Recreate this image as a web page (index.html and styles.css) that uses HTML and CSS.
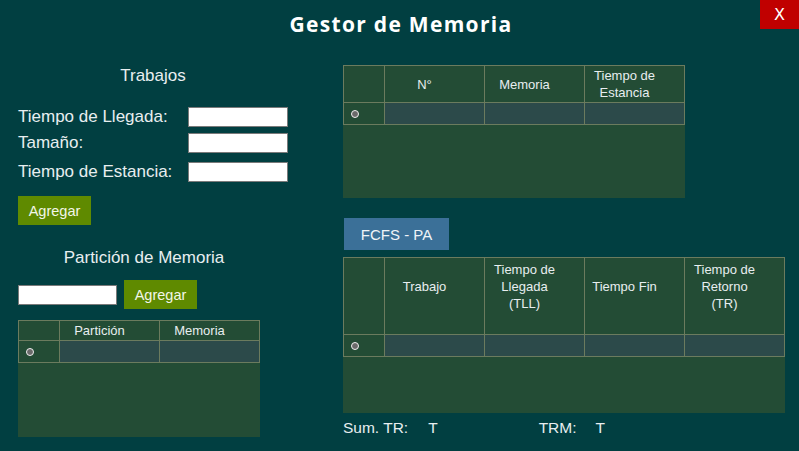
FILE: index.html
```html
<!DOCTYPE html>
<html lang="es">
<head>
<meta charset="utf-8">
<title>Gestor de Memoria</title>
<link rel="stylesheet" href="styles.css">
</head>
<body>
<div class="window">
  <header class="titlebar">
    <h1 class="title">Gestor de Memoria</h1>
    <button class="close">X</button>
  </header>
  <main class="content">
    <section class="left">
      <h2 class="section-title jobs-title">Trabajos</h2>
      <div class="form">
        <label class="field f1"><span>Tiempo de Llegada:</span><input class="txt" type="text"></label>
        <label class="field f2"><span>Tamaño:</span><input class="txt" type="text"></label>
        <label class="field f3"><span>Tiempo de Estancia:</span><input class="txt" type="text"></label>
      </div>
      <button class="btn btn-add">Agregar</button>
      <h2 class="section-title part-title">Partición de Memoria</h2>
      <div class="part-row">
        <input class="txt" type="text">
        <button class="btn btn-add2">Agregar</button>
      </div>
      <div class="grid grid-part">
        <table>
          <tr class="head"><th class="rh"></th><th class="c">Partición</th><th class="c">Memoria</th></tr>
          <tr class="row"><td class="rh"><span class="dot"></span></td><td></td><td></td></tr>
        </table>
      </div>
    </section>
    <section class="right">
      <div class="grid grid-jobs">
        <table>
          <tr class="head"><th class="rh"></th><th class="c">N°</th><th class="c">Memoria</th><th class="c">Tiempo de<br>Estancia</th></tr>
          <tr class="row"><td class="rh"><span class="dot"></span></td><td></td><td></td><td></td></tr>
        </table>
      </div>
      <button class="btn-algo">FCFS - PA</button>
      <div class="grid grid-res">
        <table>
          <tr class="head"><th class="rh"></th><th class="c">Trabajo</th><th class="c">Tiempo de<br>Llegada<br>(TLL)</th><th class="c">Tiempo Fin</th><th class="c">Tiempo de<br>Retorno<br>(TR)</th></tr>
          <tr class="row"><td class="rh"><span class="dot"></span></td><td></td><td></td><td></td><td></td></tr>
        </table>
      </div>
      <div class="summary">
        <span class="lbl">Sum. TR:</span><span class="val v1">T</span>
        <span class="lbl l2">TRM:</span><span class="val v2">T</span>
      </div>
    </section>
  </main>
</div>
</body>
</html>
```
FILE: styles.css
```css
* { box-sizing: border-box; }
html, body { margin: 0; padding: 0; }
body {
  background: #013f41;
  font-family: "Liberation Sans", Arial, sans-serif;
  color: #e8eef0;
  width: 799px;
  height: 451px;
  overflow: hidden;
}
.window { position: relative; width: 799px; height: 451px; }
.titlebar { height: 50px; display: flex; justify-content: center; align-items: flex-start; }
.title {
  margin: 10px 0 0 3px;
  font-family: "Open Sans", sans-serif;
  font-weight: 700;
  font-size: 21px;
  letter-spacing: 1.3px;
  color: #ffffff;
  line-height: 28px;
}
.close {
  position: absolute;
  right: 0;
  top: 0;
  width: 39px;
  height: 29px;
  border: 0;
  background: #c00000;
  color: #fff;
  font-family: "DejaVu Sans", sans-serif;
  font-size: 16px;
  padding: 0;
}
.content { display: flex; }
.left { width: 343px; flex: none; padding-left: 18px; display: flex; flex-direction: column; }
.right { display: flex; flex-direction: column; padding-top: 15px; }
.section-title {
  margin: 0;
  font-weight: 400;
  font-size: 17px;
  color: #e8eef0;
  text-align: center;
  width: 270px;
  line-height: 20px;
}
.jobs-title { margin-top: 16px; }
.form { margin-top: 21px; display: flex; flex-direction: column; }
.field { display: flex; align-items: center; justify-content: space-between; width: 270px; font-size: 17px; height: 20px; }
.f2 { margin-top: 6px; }
.f3 { margin-top: 9px; }
.txt {
  width: 100px;
  height: 20px;
  border: 1px solid #7a7a7a;
  background: #fff;
  padding: 0;
  margin: 0;
}
.btn {
  background: #5f8a00;
  color: #f2f6e8;
  border: 0;
  font-family: "Liberation Sans", Arial, sans-serif;
  font-size: 14.5px;
  padding: 0;
}
.btn-add { margin-top: 14px; width: 73px; height: 29px; }
.part-title { margin-top: 23px; width: 252px; }
.part-row { margin-top: 12px; display: flex; align-items: center; gap: 7px; }
.part-row .txt { width: 99px; }
.btn-add2 { width: 73px; height: 29px; }
.grid { background: #234c35; }
.grid table { border-collapse: collapse; }
.grid th, .grid td { border: 1px solid #6b7b5e; padding: 0; }
.grid th {
  font-weight: 400;
  font-size: 13px;
  line-height: 17px;
  color: #e8eef0;
  background: #234c35;
}
.grid th.c { text-align: center; padding-right: 20px; width: 100px; }
.grid .rh { width: 41px; }
.grid td { background: #2c4a4a; height: 22px; }
.grid td.rh { background: #234c35; text-align: left; padding-left: 7px; }
.dot {
  display: inline-block;
  width: 8px;
  height: 8px;
  border-radius: 50%;
  background: #6a6a6a;
  border: 1.5px solid #f0f0f0;
  vertical-align: middle;
}
.grid-part { margin-top: 11px; width: 242px; height: 117px; }
.grid-part .head th { height: 20px; }
.grid-jobs { width: 342px; height: 133px; }
.grid-jobs .head th { height: 37px; }
.btn-algo {
  margin-top: 20px;
  width: 105px;
  height: 32px;
  background: #3b7098;
  color: #f0f4f8;
  border: 0;
  font-family: "Liberation Sans", Arial, sans-serif;
  font-size: 15px;
  padding: 0;
  margin-left: 1px;
}
.grid-res { margin-top: 7px; width: 442px; height: 156px; }
.grid-res .head th { height: 77px; padding-bottom: 20px; }
.summary { margin-top: 5px; font-size: 15.5px; display: flex; line-height: 20px; }
.summary .v1 { margin-left: 20px; }
.summary .l2 { margin-left: 101px; }
.summary .v2 { margin-left: 19px; }
```
